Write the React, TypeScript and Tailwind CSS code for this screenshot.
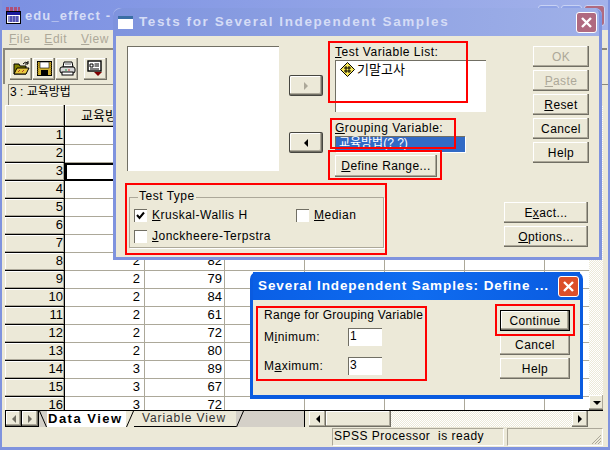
import React from "react";

const raised = "bg-[#ece9d8] shadow-[inset_-1px_-1px_0_#716f64,inset_-2px_-2px_0_#aca899,inset_1px_1px_0_#ffffff]";
const sunken = "bg-white shadow-[inset_1px_1px_0_#716f64,inset_-1px_-1px_0_#ffffff]";
const redBox = "absolute border-2 border-[#ff0000] pointer-events-none";
const checker = "bg-[repeating-conic-gradient(#ece9d8_0%_25%,#ffffff_0%_50%)] bg-[length:2px_2px]";

function Btn({ children, cls = "", disabled = false }: { children: React.ReactNode; cls?: string; disabled?: boolean }) {
  return (
    <div className={`${raised} flex items-center justify-center h-[21px] tracking-[0.4px] ${disabled ? "text-[#aca899]" : "text-black"} ${cls}`}>
      {children}
    </div>
  );
}

function Check({ on = false }: { on?: boolean }) {
  return (
    <div className={`${sunken} w-[13px] h-[13px] shrink-0 flex items-center justify-center`}>
      {on && (
        <svg width="9" height="9" viewBox="0 0 9 9">
          <path d="M1 4 L3.5 7 L8 1.5" fill="none" stroke="#000" strokeWidth="2" />
        </svg>
      )}
    </div>
  );
}

function ScaleIcon() {
  return (
    <svg width="15" height="15" viewBox="0 0 15 15" className="shrink-0">
      <path d="M7.5 0.5 L14.5 7.5 L7.5 14.5 L0.5 7.5 Z" fill="#f8e858" stroke="#000" strokeWidth="1" />
      <path d="M6 4 V11 M9 4 V11 M4 6 H11 M4 9 H11" stroke="#000" strokeWidth="1" />
    </svg>
  );
}

function SpssIcon() {
  return (
    <svg width="17" height="17" viewBox="0 0 17 17" className="shrink-0">
      <rect x="1.5" y="4.5" width="14" height="12" fill="#fff" stroke="#000" />
      <rect x="2" y="5" width="13" height="3" fill="#1a1a9c" />
      <path d="M3 10 H14 M3 12 H14 M3 14 H14 M6 9 V15 M9 9 V15 M12 9 V15" stroke="#1a1a9c" strokeWidth="1" />
      <path d="M1 1 H15 M1 3 H15" stroke="#e01010" strokeWidth="1" strokeDasharray="3 1" />
    </svg>
  );
}

function ToolIcon({ kind }: { kind: string }) {
  if (kind === "open")
    return (
      <svg width="17" height="15" viewBox="0 0 17 15">
        <path d="M1 3 H6 L7 5 H13 V13 H1 Z" fill="#808000" stroke="#000" />
        <path d="M1 13 L4 7 H16 L13 13 Z" fill="#e8c840" stroke="#000" />
        <path d="M5 11 L7 9 M9 11 L11 9" stroke="#b04020" />
        <path d="M10 3 Q12 0 15 2 M15 0 V3 H12" fill="none" stroke="#000" />
      </svg>
    );
  if (kind === "save")
    return (
      <svg width="15" height="15" viewBox="0 0 15 15">
        <rect x="0.5" y="0.5" width="14" height="14" fill="#d0b030" stroke="#000" />
        <rect x="3" y="1" width="9" height="6" fill="#fff" stroke="#000" strokeWidth="0.6" />
        <rect x="4" y="9" width="7" height="5" fill="#000" />
        <path d="M1 2 V13 M14 2 V13" stroke="#806000" strokeDasharray="1 1" />
      </svg>
    );
  if (kind === "print")
    return (
      <svg width="17" height="15" viewBox="0 0 17 15">
        <path d="M5 1 H13 L14 6 H4 Z" fill="#fff" stroke="#000" />
        <rect x="1" y="6" width="15" height="6" rx="2" fill="#d8d8d8" stroke="#000" />
        <rect x="3" y="11" width="11" height="3" fill="#fff" stroke="#000" />
        <path d="M6 9 H8" stroke="#20a040" />
        <path d="M9 9 H11" stroke="#e03030" />
        <path d="M6 3 H12" stroke="#666" />
      </svg>
    );
  return (
    <svg width="17" height="17" viewBox="0 0 17 17">
      <rect x="1" y="1" width="13" height="10" fill="#fff" stroke="#000" strokeWidth="1.4" />
      <path d="M3 4 H6 V7 H3 Z M7.5 4 H12 M7.5 6 H12 M3 9 H12" fill="none" stroke="#000" />
      <path d="M7 12 H15 L11 16 Z" fill="#800000" />
    </svg>
  );
}

function CloseX({ cls }: { cls: string }) {
  return (
    <div className={`w-[21px] h-[21px] rounded-[3px] border border-white flex items-center justify-center shrink-0 ${cls}`}>
      <svg width="13" height="13" viewBox="0 0 13 13">
        <path d="M2 2 L11 11 M11 2 L2 11" stroke="#fff" strokeWidth="2.4" />
      </svg>
    </div>
  );
}

function Arrow({ dir, color = "#000" }: { dir: "l" | "r" | "d"; color?: string }) {
  const d = dir === "l" ? "M5 0 V8 L1 4 Z" : dir === "r" ? "M1 0 V8 L5 4 Z" : "M0 1 H8 L4 5 Z";
  return (
    <svg width={dir === "d" ? 8 : 6} height={dir === "d" ? 6 : 8} viewBox={dir === "d" ? "0 0 8 6" : "0 0 6 8"}>
      <path d={d} fill={color} />
    </svg>
  );
}

const rows: [number, string, string][] = [
  [1, "", ""], [2, "", ""], [3, "", ""], [4, "", ""], [5, "", ""], [6, "", ""], [7, "", ""],
  [8, "2", "82"], [9, "2", "79"], [10, "2", "84"], [11, "2", "61"], [12, "2", "72"], [13, "2", "80"],
  [14, "3", "89"], [15, "3", "67"], [16, "3", "72"],
];

const headerCell = "bg-[#ece9d8] shadow-[inset_-1px_-1px_0_#000000,inset_-2px_-2px_0_#aca899,inset_1px_1px_0_#ffffff] text-[13px]";

function DataGrid() {
  return (
    <div className="flex-1 min-h-0 overflow-hidden flex">
      <div className="w-[584px] overflow-hidden shrink-0">
        <div className="flex h-[22px]">
          <div className={`w-[60px] ${headerCell}`} />
          <div className={`w-[80px] ${headerCell} flex items-center justify-center`}>교육방법</div>
          <div className={`w-[80px] ${headerCell}`} />
          <div className={`w-[80px] ${headerCell}`} />
          <div className={`w-[80px] ${headerCell}`} />
          <div className={`w-[80px] ${headerCell}`} />
          <div className={`w-[80px] ${headerCell}`} />
          <div className={`w-[44px] ${headerCell}`} />
        </div>
        {rows.map(([n, a, b]) => (
          <div key={n} className="flex h-[18px] leading-[16px] text-[13px]">
            <div className={`w-[60px] ${headerCell} pr-[2px] text-right`}>{n}</div>
            <div className={`w-[80px] border-r border-b border-[#aca899] bg-white pr-[4px] text-right ${n === 3 ? "outline-2 -outline-offset-2 outline-black" : ""}`}>{a}</div>
            <div className="w-[80px] border-r border-b border-[#aca899] bg-white pr-[2px] text-right">{b}</div>
            <div className="w-[80px] border-r border-b border-[#aca899] bg-white" />
            <div className="w-[80px] border-r border-b border-[#aca899] bg-white" />
            <div className="w-[80px] border-r border-b border-[#aca899] bg-white" />
            <div className="w-[80px] border-r border-b border-[#aca899] bg-white" />
            <div className="w-[44px] border-b border-[#aca899] bg-white" />
          </div>
        ))}
      </div>
      <div className="w-[15px] flex flex-col shrink-0">
        <div className={`flex-1 ${checker}`} />
        <div className={`${raised} h-[15px] flex items-center justify-center`}>
          <Arrow dir="d" />
        </div>
      </div>
    </div>
  );
}

function Slash({ flip = false, bg = "#d4d0c8" }: { flip?: boolean; bg?: string }) {
  return (
    <svg width="8" height="16" viewBox="0 0 8 16" className="shrink-0" style={{ background: bg }}>
      <path d={flip ? "M7.5 0 L0.5 16" : "M0.5 0 L7.5 16"} stroke="#000" fill="none" />
    </svg>
  );
}

function MainWindow() {
  return (
    <div className="w-[610px] h-[450px] flex flex-col bg-[#7f93de] px-[2px] pb-[3px]">
      <div className="h-[30px] shrink-0 bg-gradient-to-r from-[#7b90e2] to-[#a3b2ea] flex items-center pl-[3px] pt-[1px] relative">
        <SpssIcon />
        <span className="ml-[3px] font-bold text-[13px] tracking-[1.1px] text-[#d5dcf6]">edu_effect -</span>
        <div className="absolute left-[536px] top-[5px] flex gap-[2px]">
          <div className="w-[21px] h-[21px] rounded-[3px] border border-[#c8d2f4] bg-[#8ea2e6]" />
          <div className="w-[21px] h-[21px] rounded-[3px] border border-[#c8d2f4] bg-[#8ea2e6]" />
          <div className="w-[21px] h-[21px] rounded-[3px] border border-[#c8d2f4] bg-[#b06a80]" />
        </div>
      </div>
      <div className="flex-1 min-h-0 flex flex-col bg-[#ece9d8]">
        <div className="h-[18px] shrink-0 flex items-center text-[#aca899] pl-[7px] gap-[14px] tracking-[0.5px]">
          <span><u>F</u>ile</span><span><u>E</u>dit</span><span><u>V</u>iew</span>
        </div>
        <div className="h-[36px] shrink-0 mx-[1px] border-t-2 border-l-2 border-[#8b887c] flex items-center pl-[5px] pt-[3px]">
          {["open", "save", "print"].map((k) => (
            <div key={k} className={`${raised} w-[22px] h-[22px] flex items-center justify-center mr-[1px]`}>
              <ToolIcon kind={k} />
            </div>
          ))}
          <div className={`${raised} w-[23px] h-[22px] flex items-center justify-center ml-[5px]`}>
            <ToolIcon kind="recall" />
          </div>
        </div>
        <div className="h-[21px] shrink-0 ml-[6px] border-t border-l border-[#8b887c] pl-[1px] leading-[14px]">3 : 교육방법</div>
        <div className="flex-1 min-h-0 flex flex-col pl-[3px] pr-[5px]">
          <DataGrid />
          <div className="h-[17px] shrink-0 flex border-t border-black bg-[#d4d0c8]">
            <div className={`${raised} w-[17px] flex items-center justify-center border border-black border-t-0`}><Arrow dir="l" color="#716f64" /></div>
            <div className={`${raised} w-[17px] flex items-center justify-center border border-l-0 border-t-0 border-black`}><Arrow dir="r" color="#716f64" /></div>
            <Slash />
            <div className="w-[79px] shrink-0 bg-white font-bold tracking-[1.5px] text-[13px] pl-[1px] leading-[15px] border-b border-white">Data View</div>
            <Slash flip bg="#ece9d8" />
            <div className="w-[102px] shrink-0 bg-[#ece9d8] text-[#333] pl-[8px] leading-[15px] tracking-[0.9px] border-b border-black">Variable View</div>
            <Slash flip />
            <div className="w-[61px] shrink-0 border-r border-black" />
            <div className="w-[4px] shrink-0 bg-[#ece9d8]" />
            <div className={`${raised} w-[17px] shrink-0 flex items-center justify-center`}><Arrow dir="l" /></div>
            <div className={`${raised} w-[65px] shrink-0`} />
            <div className={`flex-1 ${checker}`} />
            <div className={`${raised} w-[16px] shrink-0 flex items-center justify-center`}><Arrow dir="r" /></div>
            <div className="w-[15px] shrink-0 bg-[#ece9d8]" />
          </div>
          <div className="h-[20px] shrink-0 flex pt-[1px] pb-[1px]">
            <div className="w-[327px]" />
            <div className="w-[172px] border border-[#aca899] border-r-white border-b-white pl-[1px] leading-[15px] tracking-[0.5px]">SPSS Processor&nbsp; is ready</div>
            <div className="ml-[3px] flex-1 border border-[#aca899] border-r-white border-b-white relative">
              <svg width="12" height="12" viewBox="0 0 12 12" className="absolute right-0 bottom-0">
                <path d="M11 2 L2 11 M11 5 L5 11 M11 8 L8 11" stroke="#aca899" />
              </svg>
            </div>
          </div>
        </div>
      </div>
    </div>
  );
}

function TestsDialog() {
  return (
    <div className="absolute left-[113px] top-[8px] w-[489px] h-[252px] bg-[#7f93de] rounded-t-[7px] px-[3px] pb-[3px] flex flex-col shadow-[inset_0_1px_0_#a9b7ec]">
      <div className="h-[28px] shrink-0 flex items-center bg-gradient-to-r from-[#7f94de] to-[#9fb0e8] rounded-t-[6px] pr-[2px]">
        <div className="w-[15px] h-[13px] bg-white border-t-[3px] border-[#3a6ea5] ml-[2px] mr-[6px] shrink-0" />
        <span className="font-bold text-[13.5px] tracking-[1.6px] text-[#d5dcf6]">Tests for Several Independent Samples</span>
        <CloseX cls="ml-auto bg-[#b06a80]" />
      </div>
      <div className="flex-1 bg-[#ece9d8] relative pl-[11px] pt-[10px] flex flex-col">
        <div className="flex h-[144px] shrink-0">
          <div className={`${sunken} w-[152px] h-[125px]`} />
          <div className="w-[34px] ml-[10px] pt-[29px] flex flex-col gap-[36px]">
            <Btn cls="border border-black/70 rounded-[2px]"><Arrow dir="r" color="#aca899" /></Btn>
            <Btn cls="border border-black/70 rounded-[2px]"><Arrow dir="l" /></Btn>
          </div>
          <div className="w-[151px] ml-[12px] flex flex-col">
            <div className="h-[14px] leading-[14px] mt-[-1px] tracking-[0.5px]"><u>T</u>est Variable List:</div>
            <div className={`${sunken} h-[52px] mt-[1px] pl-[5px] pt-[2px] flex items-start gap-[2px]`}>
              <ScaleIcon /><span className="leading-[15px] text-[13px]">기말고사</span>
            </div>
            <div className="h-[14px] leading-[14px] mt-[9px] tracking-[0.5px]"><u>G</u>rouping Variable:</div>
            <div className="h-[16px] w-[130px] mt-[1px] bg-[#316ac5] text-white shadow-[inset_1px_1px_0_#716f64,1px_1px_0_#fff] pl-[4px] leading-[15px] overflow-hidden">교육방법(? ?)</div>
            <Btn cls="w-[102px] !h-[22px] mt-[3px]"><span><u>D</u>efine Range...</span></Btn>
          </div>
          <div className="w-[56px] ml-[47px] flex flex-col gap-[3px]">
            <Btn disabled>OK</Btn>
            <Btn disabled><span><u>P</u>aste</span></Btn>
            <Btn><span><u>R</u>eset</span></Btn>
            <Btn>Cancel</Btn>
            <Btn>Help</Btn>
          </div>
        </div>
        <div className="flex">
          <div className="ml-[2px] mt-[7px] w-[255px] h-[51px] border border-[#aca899] shadow-[1px_1px_0_#fff] relative pl-[4px] pt-[10px] flex flex-col gap-[7px]">
            <div className="absolute left-[8px] top-[-9px] bg-[#ece9d8] px-[1px] leading-[14px] tracking-[0.5px]">Test Type</div>
            <div className="flex items-center h-[14px] leading-[14px]">
              <Check on />
              <span className="ml-[5px] w-[144px] tracking-[0.5px]"><u>K</u>ruskal-Wallis H</span>
              <Check />
              <span className="ml-[5px] tracking-[0.5px]"><u>M</u>edian</span>
            </div>
            <div className="flex items-center h-[14px] leading-[14px]">
              <Check />
              <span className="ml-[5px] tracking-[0.5px]"><u>J</u>onckheere-Terpstra</span>
            </div>
          </div>
          <div className="ml-auto mr-[11px] mt-[12px] w-[84px] flex flex-col gap-[3px]">
            <Btn><span>E<u>x</u>act...</span></Btn>
            <Btn><span><u>O</u>ptions...</span></Btn>
          </div>
        </div>
        <div className={`${redBox} left-[212px] top-[5px] w-[140px] h-[62px]`} />
        <div className={`${redBox} left-[214px] top-[82px] w-[126px] h-[31px]`} />
        <div className={`${redBox} left-[212px] top-[114px] w-[114px] h-[30px]`} />
        <div className={`${redBox} left-[9px] top-[147px] w-[262px] h-[72px]`} />
      </div>
    </div>
  );
}

function RangeDialog() {
  return (
    <div className="absolute left-[250px] top-[272px] w-[333px] h-[127px] bg-[#0a5be0] rounded-t-[7px] px-[3px] pb-[4px] flex flex-col">
      <div className="h-[28px] shrink-0 flex items-center bg-gradient-to-r from-[#0a5fe6] via-[#0f6cf0] to-[#0a5be0] pl-[5px] pr-[1px]">
        <span className="font-bold text-[13.5px] tracking-[0.9px] text-white">Several Independent Samples: Define ...</span>
        <CloseX cls="ml-auto bg-[#dc4f2a]" />
      </div>
      <div className="flex-1 bg-[#ece9d8] relative flex pl-[11px] pt-[8px]">
        <div className="w-[180px] flex flex-col">
          <div className="leading-[14px] tracking-[0.27px] mb-[6px] whitespace-nowrap">Range for Grouping Variable</div>
          <div className="flex items-center h-[18px]">
            <span className="w-[84px] tracking-[0.5px]">M<u>i</u>nimum:</span>
            <div className={`${sunken} w-[34px] h-[18px] pl-[2px] leading-[17px]`}>1</div>
          </div>
          <div className="flex items-center h-[18px] mt-[11px]">
            <span className="w-[84px] tracking-[0.5px]">M<u>a</u>ximum:</span>
            <div className={`${sunken} w-[34px] h-[18px] pl-[2px] leading-[17px]`}>3</div>
          </div>
        </div>
        <div className="ml-auto mr-[10px] mt-[2px] w-[70px] flex flex-col">
          <Btn cls="border border-black">Continue</Btn>
          <Btn cls="mt-[3px]">Cancel</Btn>
          <Btn cls="mt-[3px]">Help</Btn>
        </div>
        <div className={`${redBox} left-[3px] top-[6px] w-[171px] h-[75px]`} />
        <div className={`${redBox} left-[242px] top-[4px] w-[80px] h-[32px]`} />
      </div>
    </div>
  );
}

export default function App() {
  return (
    <div className="relative w-[610px] h-[450px] overflow-hidden text-[12px] text-black font-['Liberation_Sans','Noto_Sans_CJK_KR',sans-serif]">
      <MainWindow />
      <TestsDialog />
      <RangeDialog />
    </div>
  );
}
